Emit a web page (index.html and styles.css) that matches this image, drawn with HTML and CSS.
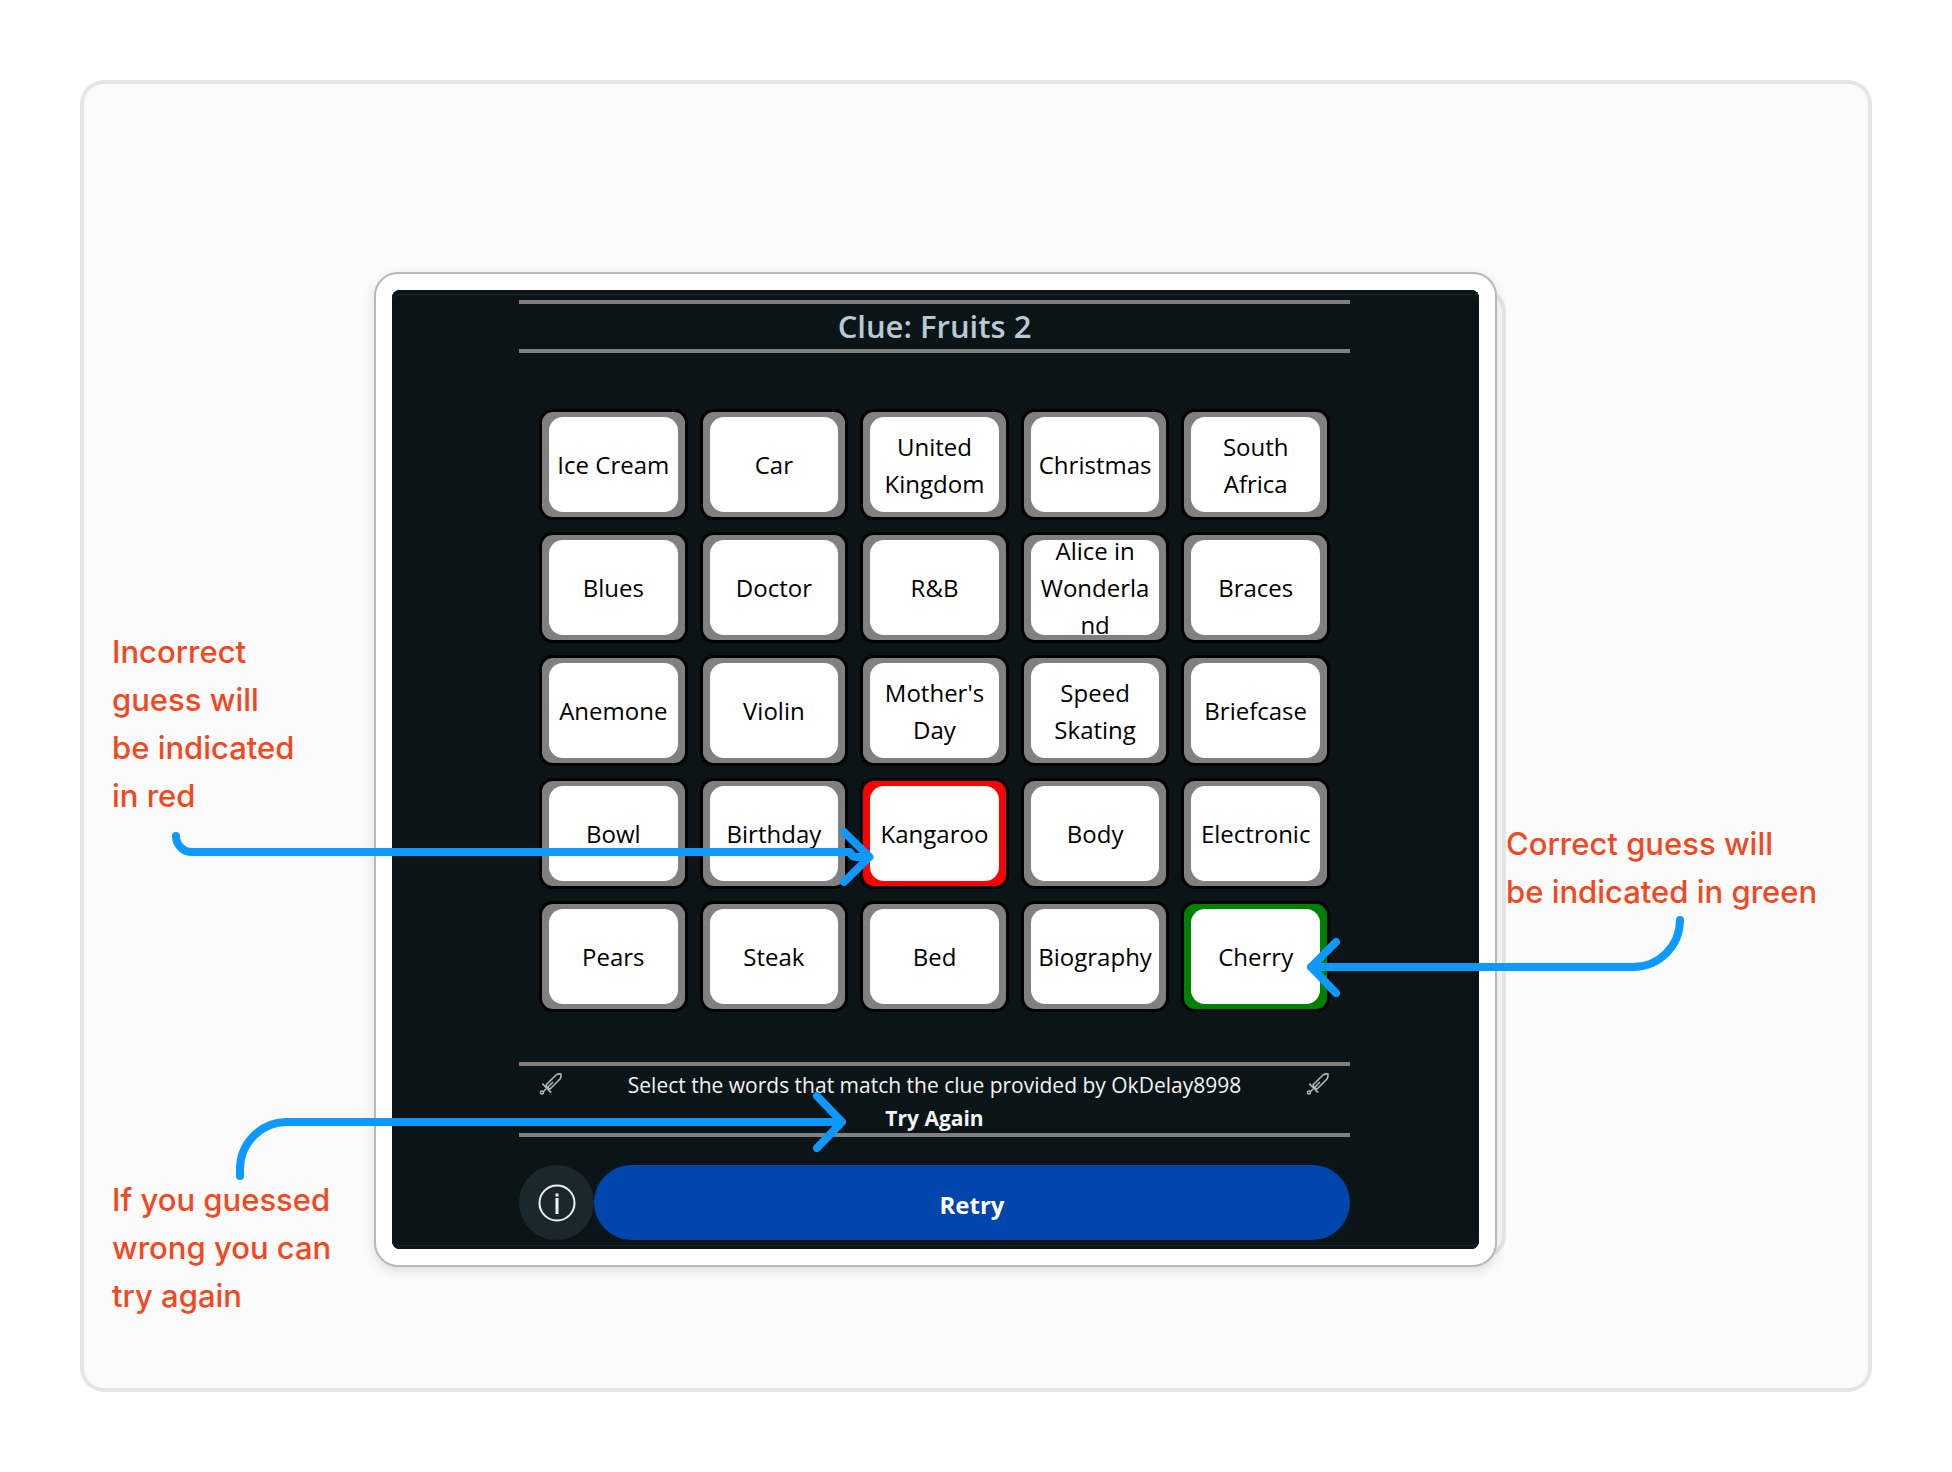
FILE: index.html
```html
<!DOCTYPE html>
<html lang="en">
<head>
<meta charset="utf-8">
<meta name="viewport" content="width=device-width, initial-scale=1">
<title>Clue: Fruits 2</title>
<link rel="stylesheet" href="styles.css">
</head>
<body>
<main class="panel">
  <aside class="notes notes-left">
    <p class="note">Incorrect<br>guess will<br>be indicated<br>in red</p>
    <p class="note">If you guessed<br>wrong you can<br>try again</p>
  </aside>

  <section class="card">
    <div class="screen">
      <div class="game">
        <h1 class="clue">Clue: Fruits 2</h1>
        <div class="board">
          <button class="tile"><span>Ice Cream</span></button>
          <button class="tile"><span>Car</span></button>
          <button class="tile"><span>United Kingdom</span></button>
          <button class="tile"><span>Christmas</span></button>
          <button class="tile"><span>South<br>Africa</span></button>
          <button class="tile"><span>Blues</span></button>
          <button class="tile"><span>Doctor</span></button>
          <button class="tile"><span>R&amp;B</span></button>
          <button class="tile"><span>Alice in<br>Wonderla<br>nd</span></button>
          <button class="tile"><span>Braces</span></button>
          <button class="tile"><span>Anemone</span></button>
          <button class="tile"><span>Violin</span></button>
          <button class="tile"><span>Mother's<br>Day</span></button>
          <button class="tile"><span>Speed Skating</span></button>
          <button class="tile"><span>Briefcase</span></button>
          <button class="tile"><span>Bowl</span></button>
          <button class="tile"><span>Birthday</span></button>
          <button class="tile tile-wrong"><span>Kangaroo</span></button>
          <button class="tile"><span>Body</span></button>
          <button class="tile"><span>Electronic</span></button>
          <button class="tile"><span>Pears</span></button>
          <button class="tile"><span>Steak</span></button>
          <button class="tile"><span>Bed</span></button>
          <button class="tile"><span>Biography</span></button>
          <button class="tile tile-right"><span>Cherry</span></button>
        </div>
        <div class="status">
          <svg class="sword" viewBox="0 0 24 24" aria-hidden="true"><path d="M8 15 L7 13 L17 3 Q19 1.500 22 2 Q22.500 5 21 7 L11 17 Z M9 15 L14 10 M3 12 Q4.500 12 5.500 14 L10 18.500 Q11 20 12.500 20 M7 17 L4 20"/><circle cx="3" cy="20.500" r="1.500"/></svg>
          <div class="status-text">
            <p class="prompt">Select the words that match the clue provided by OkDelay8998</p>
            <p class="result">Try Again</p>
          </div>
          <svg class="sword" viewBox="0 0 24 24" aria-hidden="true"><path d="M8 15 L7 13 L17 3 Q19 1.500 22 2 Q22.500 5 21 7 L11 17 Z M9 15 L14 10 M3 12 Q4.500 12 5.500 14 L10 18.500 Q11 20 12.500 20 M7 17 L4 20"/><circle cx="3" cy="20.500" r="1.500"/></svg>
        </div>
        <div class="actions">
          <button class="info" aria-label="Information">
            <svg viewBox="0 0 38 38" aria-hidden="true"><circle cx="19" cy="19" r="17.500"/><path class="glyph" d="M19 14V30M19 9.500V12.500"/></svg>
          </button>
          <button class="retry">Retry</button>
        </div>
      </div>
    </div>
  </section>

  <aside class="notes notes-right">
    <p class="note">Correct guess will<br>be indicated in green</p>
  </aside>

  <svg class="arrows" viewBox="80 80 1792 1312" aria-hidden="true">
    <path d="M176 836A16 16 0 0 0 192 852H850Q852 857 856 857H869M844 832L869.500 857L844 882"/>
    <path d="M240 1176V1169A47 47 0 0 1 287 1122H841M817 1096L842 1122L817 1148"/>
    <path d="M1680 920A47 47 0 0 1 1633 967H1311M1336 942L1311 967L1336 993"/>
  </svg>
</main>
</body>
</html>
```
FILE: styles.css
```css
* {
  box-sizing: border-box;
}

body {
  margin: 0;
  padding: 80px;
  background: #fff;
  font-family: "Open Sans", "Noto Sans", sans-serif;
}

h1,
p {
  margin: 0;
}

button {
  border: 0;
  padding: 0;
  font: inherit;
  cursor: pointer;
}

.panel {
  position: relative;
  z-index: 0;
  display: grid;
  grid-template-columns: 290px minmax(0, 1123px) minmax(0, 1fr);
  align-items: start;
  padding: 188px 0 68px;
  border: 4px solid #e6e6e6;
  border-radius: 24px;
  background: #fbfbfb;
}

.notes {
  display: flex;
  flex-direction: column;
  gap: 356px;
}

.notes-left {
  padding: 356px 0 0 28px;
}

.notes-right {
  padding: 548px 0 0 9px;
}

.note {
  color: #f24822;
  font: 500 31px/48px Inter, sans-serif;
  white-space: nowrap;
}

.card {
  position: relative;
  padding: 16px;
  border: 2px solid #b8b8b8;
  border-radius: 24px;
  background: #fff;
  box-shadow: 0 4px 12px rgba(0, 0, 0, 0.12);
}

/* The second sheet shows as a thin edge on the right of the card */
.card::before {
  content: "";
  position: absolute;
  z-index: -1;
  inset: 14px -11px 6px 14px;
  border: 4px solid #e6e6e6;
  border-radius: 24px;
}

.screen {
  padding: 10px 129px 9px 127px;
  border-radius: 8px;
  background: #0b1416;
  box-shadow: inset 0 4px #0b1416, inset 0 5px #1c2629, inset 0 -3px #0b1416, inset 0 -4px #1c2629;
}

.clue {
  border: solid #808080;
  border-width: 4px 0;
  color: #b7cad4;
  font-size: 31px;
  font-weight: 600;
  line-height: 45px;
  text-align: center;
}

.board {
  display: grid;
  grid-template-columns: repeat(5, minmax(0, 1fr));
  grid-auto-rows: 111px;
  gap: 12px;
  padding: 56px 20px 50px;
}

.tile {
  display: flex;
  padding: 5px 7px;
  border: 3px solid #000;
  border-radius: 14px;
  background: #808080;
  color: #000;
  font-size: 24px;
  line-height: 37px;
}

.tile span {
  display: flex;
  flex: 1;
  align-items: center;
  justify-content: center;
  align-self: stretch;
  overflow: hidden;
  border-radius: 14px;
  background: #fff;
  text-align: center;
}

.tile-wrong {
  background: #f00;
}

.tile-right {
  background: #008000;
}

.status {
  display: flex;
  justify-content: space-between;
  height: 75px;
  padding: 3px 20px 0;
  border: solid #808080;
  border-width: 4px 0;
  color: #f2f4f5;
  line-height: 33px;
}

.status-text {
  font-size: 21px;
  text-align: center;
}

.prompt {
  font-weight: 500;
}

.result {
  font-weight: 700;
}

.sword {
  width: 24px;
  height: 24px;
  margin-top: 3px;
  fill: none;
  stroke: #b4babc;
  stroke-width: 1.5;
}

.actions {
  display: flex;
  height: 75px;
  margin-top: 28px;
}

.info,
.retry {
  border-radius: 38px;
}

.info {
  display: grid;
  place-items: center;
  width: 75px;
  background: #1a282d;
}

.info svg {
  width: 38px;
  height: 38px;
  fill: none;
  stroke: #eef1f2;
  stroke-width: 2;
}

.info .glyph {
  stroke-width: 3;
}

.retry {
  flex: 1;
  padding-top: 4px;
  background: #0045ac;
  color: #fff;
  font-size: 24px;
  font-weight: 700;
}

.arrows {
  position: absolute;
  inset: -4px;
  width: calc(100% + 8px);
  height: calc(100% + 8px);
  fill: none;
  stroke: #0d99ff;
  stroke-width: 8;
  stroke-linecap: round;
  stroke-linejoin: round;
  pointer-events: none;
}
```
